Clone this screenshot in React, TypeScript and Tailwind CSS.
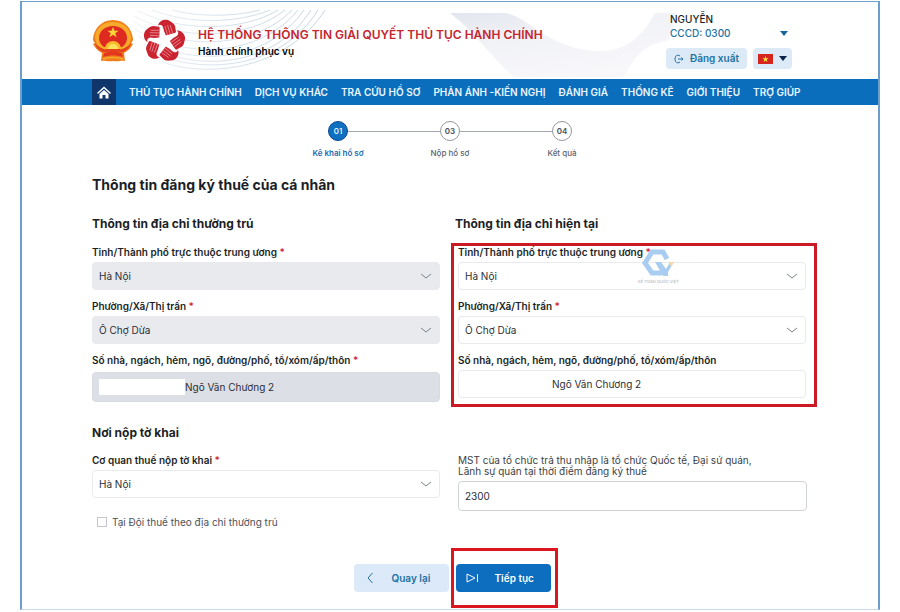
import React from "react";

const NAV_ITEMS = [
  "THỦ TỤC HÀNH CHÍNH",
  "DỊCH VỤ KHÁC",
  "TRA CỨU HỒ SƠ",
  "PHẢN ÁNH -KIẾN NGHỊ",
  "ĐÁNH GIÁ",
  "THỐNG KÊ",
  "GIỚI THIỆU",
  "TRỢ GIÚP",
];

const STEPS = [
  { no: "01", label: "Kê khai hồ sơ", active: true },
  { no: "03", label: "Nộp hồ sơ", active: false },
  { no: "04", label: "Kết quả", active: false },
];

function Emblem() {
  return (
    <svg viewBox="0 0 42 44" className="h-[44px] w-[42px] shrink-0">
      <path
        d="M21 1C9 1 2 10 1 20c0 2 1 3 2 4l-2 1c2 4 5 7 9 9l-1 8c4-1 6 1 12 0 6 1 8-1 12 0l-1-8c4-2 7-5 9-9l-2-1c1-1 2-2 2-4C40 10 33 1 21 1z"
        fill="#ee7f1c"
      />
      <path
        d="M3 19C3 10 10 3 21 3s18 7 18 16c-1 6-4 10-10 12H13C7 29 4 25 3 19z"
        fill="#f8a92a"
      />
      <path
        d="M21 7c8 0 14 5 14 12 0 4-2 7-5 9H12c-3-2-5-5-5-9C7 12 13 7 21 7z"
        fill="#de2a20"
      />
      <path
        d="M21 8l1.500 3.800h4l-3.200 2.500 1.300 3.900-3.600-2.400-3.600 2.400 1.300-3.900-3.200-2.500h4z"
        fill="#fbd63a"
      />
      <path d="M13 30c0-5 4-8 8-8s8 3 8 8z" fill="#f9b92d" />
      <path d="M16 30c0-3 2-5 5-5s5 2 5 5z" fill="#fde35a" />
      <path
        d="M3 24c4 4 7 6 11 6h14c4 0 7-2 11-6-1 5-4 7-8 9H11c-4-2-7-4-8-9z"
        fill="#e4421e"
      />
      <path
        d="M5 25c3 3 6 4 9 5M37 25c-3 3-6 4-9 5"
        fill="none"
        stroke="#f8a92a"
        strokeWidth="1.5"
      />
      <path
        d="M12 34c6-2 12-2 18 0l1 4c-7-2-13-2-20 0z"
        fill="#e4381e"
      />
      <path
        d="M11 40c7-2 13-2 20 0"
        fill="none"
        stroke="#f8a92a"
        strokeWidth="1.5"
      />
    </svg>
  );
}

function HandsStar() {
  return (
    <svg viewBox="-22 -22 44 44" className="h-[44px] w-[44px] shrink-0">
      {[0, 72, 144, 216, 288].map((angle) => (
        <g key={angle} transform={`rotate(${angle})`}>
          <path
            d="M-6-15.500C-5-20 0-22 4-21c3 2 6 3 7 6l1 6-2 2-8 2-2-5-1-4c-1-2-3-3-5-1.500z"
            fill="#cb2230"
          />
          <path
            d="M1-15l2.500 9M3.500-16l2.700 9M6-16l2.700 8"
            fill="none"
            stroke="#f6d3d5"
            strokeWidth="0.5"
          />
        </g>
      ))}
      <path
        d="M0-14L3.400-4.700 13.300-4.300 5.500 1.800 8.200 11.300 0 5.800-8.200 11.300-5.500 1.800-13.300-4.300-3.400-4.700z"
        transform="rotate(-18)"
        fill="#fff"
      />
    </svg>
  );
}

function HeaderPattern() {
  return (
    <svg
      viewBox="0 0 856 77"
      preserveAspectRatio="xMidYMid slice"
      className="absolute inset-0 h-full w-full"
      aria-hidden="true"
    >
      <defs>
        <linearGradient id="ribbon" x1="0" y1="0" x2="0.6" y2="1">
          <stop offset="0" stopColor="#e2e6ee" />
          <stop offset="0.4" stopColor="#f1f2f6" />
          <stop offset="1" stopColor="#f8f8fb" />
        </linearGradient>
        <linearGradient id="waves" x1="108" x2="303" gradientUnits="userSpaceOnUse">
          <stop offset="0" stopColor="#eef3f7" />
          <stop offset="0.5" stopColor="#d5e1eb" />
          <stop offset="1" stopColor="#c3d4e0" />
        </linearGradient>
      </defs>
      <g fill="none" stroke="url(#waves)" strokeWidth="1">
        <path d="M150 8c25 7 62 7 88 0" />
        <path d="M130 8c36 14 84 14 118 0" />
        <path d="M116 9c42 21 104 21 140 -1" />
        <path d="M112 14c46 25 114 24 151-6" />
        <path d="M112 20c48 29 120 27 158-12" />
        <path d="M113 27c50 31 125 28 163-19" />
        <path d="M116 34c52 32 128 28 166-26" />
        <path d="M122 42c52 29 130 24 167-34" />
        <path d="M130 50c50 24 130 17 166-42" />
        <path d="M140 60c50 17 126 6 163-52" />
      </g>
      <path
        d="M428 11h55c14 3 20 9 30 15 18 13 38 23 65 23 29 0 44-18 55-38h20l-6 27c-20 4-30 12-36 22l-10 15H492c-24-21-40-46-64-64z"
        fill="url(#ribbon)"
      />
    </svg>
  );
}

function Watermark() {
  return (
    <div className="pointer-events-none absolute top-[3px] left-[184px] flex flex-col items-center">
      <svg viewBox="0 0 34 30" className="h-[30px] w-[34px]">
        <path
          d="M26 10l-4-7H11L4 14l7 10h10"
          fill="none"
          stroke="#a9cdf0"
          strokeWidth="5"
        />
        <path d="M14 13h6l5 7 4-7h4l-6 10v4h-5z" fill="#a9cdf0" />
        <path d="M28 13h5l-3 5z" fill="#f8d9ac" />
      </svg>
      <span className="text-[4px] leading-[6px] font-semibold text-[#c0c6ce]">
        KẾ TOÁN QUỐC VIỆT
      </span>
    </div>
  );
}

function Label({
  id,
  text,
  required,
}: {
  id: string;
  text: string;
  required?: boolean;
}) {
  return (
    <label
      htmlFor={id}
      className="block text-[10px] leading-3 font-semibold text-[#1c1f26]"
    >
      {text}
      {required && <span className="text-[#d3273e]"> *</span>}
    </label>
  );
}

function SelectField({
  id,
  label,
  value,
  disabled,
}: {
  id: string;
  label: string;
  value: string;
  disabled?: boolean;
}) {
  return (
    <div>
      <Label id={id} text={label} required />
      <div className="relative mt-1">
        <select
          id={id}
          disabled={disabled}
          className="block h-7 w-full appearance-none rounded border border-[#e9eaee] bg-white px-1.5 text-[10px] text-[#2b2f36] disabled:bg-[#e8eaee] disabled:opacity-100"
        >
          <option>{value}</option>
        </select>
        <svg
          viewBox="0 0 12 6"
          className="pointer-events-none absolute top-[11px] right-2 h-[6px] w-[12px]"
        >
          <path d="M1 1l5 4 5-4" fill="none" stroke="#7c828c" strokeWidth="1" />
        </svg>
      </div>
    </div>
  );
}

export default function App() {
  return (
    <div className="bg-white px-5 pt-px font-['Inter','Noto_Sans',sans-serif] text-[#1c1f26]">
      <div className="border-x-2 border-t border-b border-[#6c9fcd] border-b-[#c9d9ea]">
        <header className="relative flex h-[77px] items-start pr-[86px] pl-[70px]">
          <HeaderPattern />
          <div className="relative flex grow items-center gap-2 pt-[17px]">
            <Emblem />
            <HandsStar />
            <div className="pl-1">
              <p className="text-[12px] leading-5 font-semibold text-[#c4252f]">
                HỆ THỐNG THÔNG TIN GIẢI QUYẾT THỦ TỤC HÀNH CHÍNH
              </p>
              <p className="text-[10px] leading-3 font-semibold text-black">
                Hành chính phục vụ
              </p>
            </div>
          </div>
          <div className="relative w-[126px] pt-[10px]">
            <div className="px-1 text-[10px] leading-[14px] font-medium">
              <p>NGUYỄN</p>
              <button
                type="button"
                className="flex w-full items-center justify-between font-medium text-[#2372a3]"
              >
                CCCD: 0300
                <svg viewBox="0 0 8 5" className="h-[5px] w-[8px]">
                  <path d="M0 0h8L4 5z" fill="#17659b" />
                </svg>
              </button>
            </div>
            <div className="mt-2 flex gap-1.5">
              <button
                type="button"
                className="flex h-[21px] grow items-center justify-center gap-1.5 rounded-sm bg-[#dce9f7] text-[10px] font-semibold text-[#2372a3]"
              >
                <svg
                  viewBox="0 0 10 10"
                  className="h-[10px] w-[10px]"
                  fill="none"
                  stroke="#2372a3"
                  strokeWidth="1"
                >
                  <path d="M6 2C3 0 1 2 1 5s2 5 5 3M4 5h5M7.500 3.500L9 5 7.500 6.500" />
                </svg>
                Đăng xuất
              </button>
              <button
                type="button"
                aria-label="Tiếng Việt"
                className="flex h-[21px] w-[39px] items-center justify-center gap-1.5 rounded-sm bg-[#dce9f7]"
              >
                <svg viewBox="0 0 15 10" className="h-[10px] w-[15px]">
                  <path d="M0 0h15v10H0z" fill="#d5251f" />
                  <path
                    d="M7.500 2l.8 2.200h2.300L8.700 5.600l.7 2.300-1.900-1.400-1.900 1.400.7-2.300-1.900-1.400h2.300z"
                    fill="#ffe23c"
                  />
                </svg>
                <svg viewBox="0 0 8 5" className="h-[5px] w-[8px]">
                  <path d="M0 0h8L4 5z" fill="#0b2447" />
                </svg>
              </button>
            </div>
          </div>
        </header>

        <nav className="flex h-[26px] items-center gap-[13px] bg-[#0a6ebd] pl-[70px] text-[10px] font-semibold whitespace-nowrap text-[#eaf6ff]">
          <a
            href="#"
            aria-label="Trang chủ"
            className="flex h-full w-6 items-center justify-center bg-[#10356b]"
          >
            <svg viewBox="0 0 14 13" className="h-[13px] w-[14px]">
              <path
                d="M1 7l6-5.500L13 7"
                fill="none"
                stroke="#fff"
                strokeWidth="1.500"
                strokeLinecap="round"
              />
              <path d="M7 4l4.500 4v4.500h-3V9h-3v3.500h-3V8z" fill="#fff" />
            </svg>
          </a>
          {NAV_ITEMS.map((item) => (
            <a key={item} href="#">
              {item}
            </a>
          ))}
        </nav>

        <main className="pr-[61px] pl-[70px]">
          <ol className="flex justify-center pt-4 pr-[61px] pl-[52px]">
            {STEPS.map((step, i) => (
              <li
                key={step.no}
                className="relative flex w-28 flex-col items-center"
              >
                {i > 0 && (
                  <span className="absolute top-[10px] right-[66px] h-px w-[92px] bg-[#a3a8ad]" />
                )}
                <span
                  className={
                    step.active
                      ? "flex h-5 w-5 items-center justify-center rounded-full border border-[#0b4a8c] bg-[#0f6fc0] text-[8px] font-medium text-white"
                      : "flex h-5 w-5 items-center justify-center rounded-full border border-[#93989e] bg-white text-[8px] font-semibold text-[#4b5057]"
                  }
                >
                  {step.no}
                </span>
                <span
                  className={
                    step.active
                      ? "mt-1.5 text-[8px] leading-3 font-semibold text-[#1c6bb5]"
                      : "mt-1.5 text-[8px] leading-3 font-medium text-[#5d6470]"
                  }
                >
                  {step.label}
                </span>
              </li>
            ))}
          </ol>

          <h1 className="mt-4 text-[14px] leading-5 font-bold">
            Thông tin đăng ký thuế của cá nhân
          </h1>

          <div className="mt-[21px] grid grid-cols-[348fr_366fr] gap-x-[11px]">
            <section>
              <h2 className="text-[12px] leading-4 font-bold">
                Thông tin địa chỉ thường trú
              </h2>
              <div className="mt-[14px] flex flex-col gap-[10px]">
                <SelectField
                  id="permanent-province"
                  label="Tỉnh/Thành phố trực thuộc trung ương"
                  value="Hà Nội"
                  disabled
                />
                <SelectField
                  id="permanent-ward"
                  label="Phường/Xã/Thị trấn"
                  value="Ô Chợ Dừa"
                  disabled
                />
                <div>
                  <Label
                    id="permanent-street"
                    text="Số nhà, ngách, hẻm, ngõ, đường/phố, tổ/xóm/ấp/thôn"
                    required
                  />
                  <div className="mt-1.5 flex h-[30px] items-center rounded border border-[#d8dbe2] bg-[#dddfe6] px-1.5">
                    <span className="h-4 w-[86px] bg-white" />
                    <input
                      id="permanent-street"
                      readOnly
                      value="Ngõ Văn Chương 2"
                      className="min-w-0 grow bg-transparent text-[10px] text-[#2b2f36]"
                    />
                  </div>
                </div>
              </div>
            </section>

            <section>
              <h2 className="pl-1 text-[12px] leading-4 font-bold">
                Thông tin địa chỉ hiện tại
              </h2>
              <div className="relative mt-[11px] flex flex-col gap-[10px] border-[3px] border-[#cb1a24] pr-2 pb-1.5 pl-1">
                <SelectField
                  id="current-province"
                  label="Tỉnh/Thành phố trực thuộc trung ương"
                  value="Hà Nội"
                />
                <SelectField
                  id="current-ward"
                  label="Phường/Xã/Thị trấn"
                  value="Ô Chợ Dừa"
                />
                <div>
                  <Label
                    id="current-street"
                    text="Số nhà, ngách, hẻm, ngõ, đường/phố, tổ/xóm/ấp/thôn"
                  />
                  <input
                    id="current-street"
                    defaultValue="Ngõ Văn Chương 2"
                    className="mt-1 block h-7 w-full rounded border border-[#e9eaee] bg-white pl-[93px] text-[10px] text-[#2b2f36]"
                  />
                </div>
                <Watermark />
              </div>
            </section>
          </div>

          <div className="mt-[18px] grid grid-cols-[348fr_366fr] gap-x-[11px]">
            <section>
              <h2 className="mb-[13px] text-[12px] leading-4 font-bold">
                Nơi nộp tờ khai
              </h2>
              <SelectField
                id="tax-office"
                label="Cơ quan thuế nộp tờ khai"
                value="Hà Nội"
              />
              <label className="mt-4 flex items-center gap-[5px] pl-[5px] text-[10px] leading-4 text-[#4b5058]">
                <input
                  type="checkbox"
                  className="h-[10px] w-[10px] appearance-none border border-[#c3c7cd] bg-white"
                />
                Tại Đội thuế theo địa chỉ thường trú
              </label>
            </section>
            <div className="pt-[30px] pr-[10px] pl-[7px]">
              <label
                htmlFor="payer-tax-code"
                className="block max-w-[300px] text-[10px] leading-[11px] text-[#3b3f46]"
              >
                MST của tổ chức trả thu nhập là tổ chức Quốc tế, Đại sứ quán,
                Lãnh sự quán tại thời điểm đăng ký thuế
              </label>
              <input
                id="payer-tax-code"
                defaultValue="2300"
                className="mt-1 block h-[30px] w-full rounded border border-[#cfd2d6] bg-white px-1.5 text-[10px] text-[#2b2f36]"
              />
            </div>
          </div>

          <div className="mt-[18px] flex items-center justify-center gap-0.5 pb-px pl-0.5">
            <button
              type="button"
              className="flex h-7 w-[95px] items-center gap-[18px] rounded-sm bg-[#dbe9f8] pl-3 text-[10px] font-semibold text-[#2372a3]"
            >
              <svg viewBox="0 0 8 12" className="h-[12px] w-[8px]">
                <path
                  d="M6.500 1L2 6l4.500 5"
                  fill="none"
                  stroke="#2372a3"
                  strokeWidth="1"
                />
              </svg>
              Quay lại
            </button>
            <div className="border-[3px] border-[#dc1620] py-[13px] pr-1 pl-0.5">
              <button
                type="button"
                className="flex h-7 w-[95px] items-center gap-4 rounded-sm bg-[#0d6dbe] pl-[10px] text-[10px] font-semibold text-white"
              >
                <svg viewBox="0 0 13 10" className="h-[10px] w-[13px]">
                  <path
                    d="M1 1v8l8-4zM11.500 1v8"
                    fill="none"
                    stroke="#fff"
                    strokeWidth="1"
                    strokeLinejoin="round"
                  />
                </svg>
                Tiếp tục
              </button>
            </div>
          </div>
        </main>
      </div>
    </div>
  );
}
